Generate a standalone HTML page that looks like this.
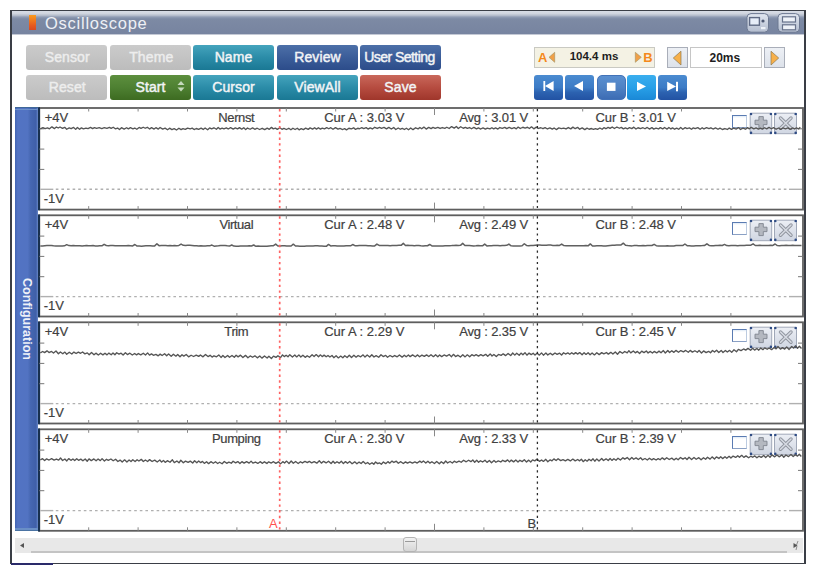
<!DOCTYPE html><html><head><meta charset="utf-8"><style>
*{margin:0;padding:0;box-sizing:border-box}
html,body{width:816px;height:574px;background:#fff;overflow:hidden;font-family:"Liberation Sans",sans-serif}
.a{position:absolute}
#win{left:10px;top:10px;width:796px;height:554px;border:2px solid #3a3e46;border-top-width:1px;border-bottom-width:1.5px;background:#fff}
#title{left:12px;top:11px;width:792px;height:24px;background:linear-gradient(#d8dde6 0,#d0d5df 2.5px,#b4bccb 4.5px,#909cb4 6px,#7d8aa4 8px,#7784a0 100%);border-bottom:1px solid #c4c9d5}
#title .t{left:33px;top:2.5px;color:#eef0f5;font-size:16.5px;letter-spacing:0.75px;line-height:19px}
.btn{width:81px;height:25px;border-radius:3px;color:#f2f4f6;font-weight:normal;-webkit-text-stroke:0.45px currentColor;font-size:14px;letter-spacing:0.1px;text-align:center;line-height:25px;white-space:nowrap}
.g{background:linear-gradient(#cbcbcb,#bcbcbc);color:#ededed;padding-left:1.5px}
.teal{background:linear-gradient(#45a4bd 0,#2b8ca8 50%,#1a7894)}
.navy{background:linear-gradient(#4d70a8 0,#3b5d99 50%,#2c4c8a)}
.green{background:linear-gradient(#5d8f3e 0,#4e8032 50%,#3d6b21)}
.red{background:linear-gradient(#c9685b 0,#b64c40 50%,#9f362b)}
.mb{width:29px;height:25px;border-radius:3px;background:linear-gradient(#4b8bd0 0,#3c7bc6 50%,#2c62b0 70%,#2252a3)}
.pt{font-size:13px;color:#404040;white-space:nowrap;line-height:13px;-webkit-text-stroke:0.2px #404040}
.cb{width:15px;height:13px;border:1.6px solid #5a7bb2;border-right:1.6px solid #bccbe0;border-bottom:1.3px solid #8aa0c4;background:linear-gradient(#dfeaf6 0,#fff 2px)}
.pb{width:22px;height:21px;border:1px solid #a4acbb;border-radius:2px;background:linear-gradient(#e6eaf1,#d2d8e3)}
.ab{width:21px;height:21.5px;border:1px solid #a9aeb9;background:linear-gradient(#edf0f5,#dde2ea)}
</style></head><body>
<div id="win" class="a"></div>
<div id="title" class="a">
<div class="a" style="left:16.6px;top:4.3px;width:7.5px;height:15px;background:linear-gradient(#f99a1c,#f07a1e 35%,#e65a20 70%,#d84a22)"></div>
<div class="a t">Oscilloscope</div>
</div>
<svg class="a" style="left:744px;top:11px" width="60" height="24">
<defs><linearGradient id="tbg" x1="0" y1="0" x2="0" y2="1"><stop offset="0" stop-color="#e2e7f0"/><stop offset="1" stop-color="#b3bdcf"/></linearGradient></defs>
<rect x="3" y="2.6" width="21.5" height="18.6" rx="4" fill="url(#tbg)" stroke="#6c7891" stroke-width="1"/>
<rect x="5.6" y="6.6" width="9.8" height="7.6" fill="#e6edf8" stroke="#5f6a84" stroke-width="1.4"/>
<circle cx="19" cy="10" r="1.6" fill="#4d5873"/>
<rect x="17" y="16" width="4.5" height="2.2" fill="#eef2f8"/>
<rect x="34" y="2.6" width="21.5" height="18.6" rx="4" fill="url(#tbg)" stroke="#6c7891" stroke-width="1"/>
<rect x="38.5" y="5.8" width="13" height="5.2" fill="#eef2f8" stroke="#67728b" stroke-width="1.2"/>
<rect x="38.5" y="13.8" width="13" height="5" fill="#eef2f8" stroke="#67728b" stroke-width="1.2"/>
</svg>
<div class="a btn g" style="left:26px;top:45px;">Sensor</div>
<div class="a btn g" style="left:110px;top:45px;">Theme</div>
<div class="a btn teal" style="left:193px;top:45px;">Name</div>
<div class="a btn navy" style="left:277px;top:45px;">Review</div>
<div class="a btn navy" style="left:360px;top:45px;letter-spacing:-0.55px;padding-right:2px;">User Setting</div>
<div class="a btn g" style="left:26px;top:75px;">Reset</div>
<div class="a btn green" style="left:110px;top:75px;">Start</div>
<div class="a btn teal" style="left:193px;top:75px;">Cursor</div>
<div class="a btn teal" style="left:277px;top:75px;">ViewAll</div>
<div class="a btn red" style="left:360px;top:75px;">Save</div>
<svg class="a" style="left:176px;top:80px" width="10" height="13"><path d="M1.5,5 L5,1 L8.5,5Z M1.5,7.5 L5,11.5 L8.5,7.5Z" fill="#c5d9bd"/></svg>
<div class="a" style="left:534px;top:46.5px;width:121px;height:21px;border:1px solid #c9c9c2;background:#f4f2e4"></div>
<div class="a" style="left:538px;top:50.5px;color:#f4891c;font-size:13px;font-weight:bold;line-height:13px">A</div>
<div class="a" style="left:643.3px;top:50.5px;color:#f4891c;font-size:13px;font-weight:bold;line-height:13px">B</div>
<svg class="a" style="left:546px;top:51px" width="12" height="14"><path d="M3,6.3 L8.7,1.3 L8.7,11.3Z" fill="#f0a048" stroke="#a09060" stroke-width="0.6"/></svg>
<svg class="a" style="left:633px;top:51px" width="12" height="14"><path d="M8.3,6.3 L2.3,1.3 L2.3,11.3Z" fill="#f0a048" stroke="#a09060" stroke-width="0.6"/></svg>
<div class="a" style="left:569.7px;top:51px;color:#1e1e1e;font-size:11.5px;font-weight:bold;line-height:11.5px">104.4 ms</div>
<div class="a ab" style="left:667px;top:46.5px"></div>
<div class="a" style="left:690px;top:46.5px;width:72px;height:21px;border:1.5px solid #c6c6c6;background:#fff"></div>
<div class="a ab" style="left:764px;top:46.5px"></div>
<svg class="a" style="left:667px;top:46.5px" width="21" height="22"><path d="M6.3,11 L14,4.2 L14,18Z" fill="#f7b04a" stroke="#8c7850" stroke-width="0.7"/></svg>
<svg class="a" style="left:764px;top:46.5px" width="21" height="22"><path d="M14.7,11 L7,4.2 L7,18Z" fill="#f7b04a" stroke="#8c7850" stroke-width="0.7"/></svg>
<div class="a" style="left:709.5px;top:51.5px;color:#1e1e1e;font-size:12px;font-weight:bold;line-height:12px">20ms</div>
<div class="a mb" style="left:534px;top:74.5px;"></div>
<svg class="a" style="left:534px;top:73.9px" width="29" height="25"><rect x="9.4" y="7" width="1.8" height="10" fill="#fff"/><path d="M11,12 L19.6,7 L19.6,17Z" fill="#fff"/></svg>
<div class="a mb" style="left:565.3px;top:74.5px;"></div>
<svg class="a" style="left:565.3px;top:73.9px" width="29" height="25"><path d="M9,12 L18,7 L18,17Z" fill="#fff"/></svg>
<div class="a mb" style="left:596.5px;top:74.5px;background:linear-gradient(#5a8fd0,#4f82c4 50%,#3d6cb4);border:1.5px solid #4272b8;border-radius:5px"></div>
<svg class="a" style="left:596.5px;top:73.9px" width="29" height="25"><rect x="9.9" y="8.7" width="8.6" height="8.2" fill="#fff"/></svg>
<div class="a mb" style="left:627px;top:74.5px;background:linear-gradient(#3aaeee,#28a0e8 50%,#1a88d6)"></div>
<svg class="a" style="left:627px;top:73.9px" width="29" height="25"><path d="M19,12.5 L10,7.8 L10,17Z" fill="#fff"/></svg>
<div class="a mb" style="left:658.3px;top:74.5px;"></div>
<svg class="a" style="left:658.3px;top:73.9px" width="29" height="25"><path d="M18,12.5 L9.2,7.8 L9.2,17Z" fill="#fff"/><rect x="18" y="7.8" width="2" height="9.5" fill="#fff"/></svg>
<div class="a" style="left:14.8px;top:107.2px;width:23.4px;height:424.3px;border-top:1.5px solid #3f6898;border-bottom:1.3px solid #4a73a3;background:linear-gradient(90deg,#4264b2 0,#5273c3 12%,#5273c2 55%,#4667b2 68%,#3f5fa8 92%,#5b7bbf 96%,#6282c4 100%)"></div>
<div class="a" style="left:14.8px;top:108.7px;width:23.4px;height:1.2px;background:#6f93c9"></div>
<div class="a" style="left:14.8px;top:528.2px;width:23.4px;height:1.8px;background:#6a8fc6"></div>
<div class="a" style="left:15.5px;top:277.5px;width:22px;height:82px;writing-mode:vertical-rl;color:#eef1f8;font-weight:bold;font-size:12.5px;line-height:22px;text-align:center;white-space:nowrap">Configuration</div>
<svg class="a" style="left:0;top:0" width="816" height="574">
<rect x="39.3" y="108" width="763.7" height="101.6" fill="#fff" stroke="#5e5e5e" stroke-width="1.8"/>
<line x1="39" y1="107.3" x2="39" y2="210.29999999999998" stroke="#18304f" stroke-width="2"/>
<line x1="40.3" y1="189.3" x2="53.3" y2="189.3" stroke="#b0b0b0" stroke-width="1.4"/>
<line x1="55.8" y1="189.3" x2="789" y2="189.3" stroke="#b0b0b0" stroke-width="1.4" stroke-dasharray="2.6 3"/>
<line x1="789" y1="189.3" x2="802" y2="189.3" stroke="#b0b0b0" stroke-width="1.4"/>
<line x1="39.3" y1="128.8" x2="44.3" y2="128.8" stroke="#777" stroke-width="1"/>
<line x1="798" y1="128.8" x2="803" y2="128.8" stroke="#777" stroke-width="1"/>
<line x1="39.3" y1="149.1" x2="44.3" y2="149.1" stroke="#777" stroke-width="1"/>
<line x1="798" y1="149.1" x2="803" y2="149.1" stroke="#777" stroke-width="1"/>
<line x1="39.3" y1="169.4" x2="44.3" y2="169.4" stroke="#777" stroke-width="1"/>
<line x1="798" y1="169.4" x2="803" y2="169.4" stroke="#777" stroke-width="1"/>
<line x1="88.7" y1="108" x2="88.7" y2="111.5" stroke="#888" stroke-width="1"/>
<line x1="88.7" y1="206.1" x2="88.7" y2="209.6" stroke="#888" stroke-width="1"/>
<line x1="138.1" y1="108" x2="138.1" y2="111.5" stroke="#888" stroke-width="1"/>
<line x1="138.1" y1="206.1" x2="138.1" y2="209.6" stroke="#888" stroke-width="1"/>
<line x1="187.5" y1="108" x2="187.5" y2="111.5" stroke="#888" stroke-width="1"/>
<line x1="187.5" y1="206.1" x2="187.5" y2="209.6" stroke="#888" stroke-width="1"/>
<line x1="236.9" y1="108" x2="236.9" y2="111.5" stroke="#888" stroke-width="1"/>
<line x1="236.9" y1="206.1" x2="236.9" y2="209.6" stroke="#888" stroke-width="1"/>
<line x1="286.3" y1="108" x2="286.3" y2="111.5" stroke="#888" stroke-width="1"/>
<line x1="286.3" y1="206.1" x2="286.3" y2="209.6" stroke="#888" stroke-width="1"/>
<line x1="335.7" y1="108" x2="335.7" y2="111.5" stroke="#888" stroke-width="1"/>
<line x1="335.7" y1="206.1" x2="335.7" y2="209.6" stroke="#888" stroke-width="1"/>
<line x1="385.1" y1="108" x2="385.1" y2="111.5" stroke="#888" stroke-width="1"/>
<line x1="385.1" y1="206.1" x2="385.1" y2="209.6" stroke="#888" stroke-width="1"/>
<line x1="434.5" y1="108" x2="434.5" y2="115" stroke="#888" stroke-width="1"/>
<line x1="434.5" y1="202.6" x2="434.5" y2="209.6" stroke="#888" stroke-width="1"/>
<line x1="483.9" y1="108" x2="483.9" y2="111.5" stroke="#888" stroke-width="1"/>
<line x1="483.9" y1="206.1" x2="483.9" y2="209.6" stroke="#888" stroke-width="1"/>
<line x1="533.3" y1="108" x2="533.3" y2="111.5" stroke="#888" stroke-width="1"/>
<line x1="533.3" y1="206.1" x2="533.3" y2="209.6" stroke="#888" stroke-width="1"/>
<line x1="582.7" y1="108" x2="582.7" y2="111.5" stroke="#888" stroke-width="1"/>
<line x1="582.7" y1="206.1" x2="582.7" y2="209.6" stroke="#888" stroke-width="1"/>
<line x1="632.1" y1="108" x2="632.1" y2="111.5" stroke="#888" stroke-width="1"/>
<line x1="632.1" y1="206.1" x2="632.1" y2="209.6" stroke="#888" stroke-width="1"/>
<line x1="681.5" y1="108" x2="681.5" y2="111.5" stroke="#888" stroke-width="1"/>
<line x1="681.5" y1="206.1" x2="681.5" y2="209.6" stroke="#888" stroke-width="1"/>
<line x1="730.9" y1="108" x2="730.9" y2="111.5" stroke="#888" stroke-width="1"/>
<line x1="730.9" y1="206.1" x2="730.9" y2="209.6" stroke="#888" stroke-width="1"/>
<rect x="39.3" y="215.3" width="763.7" height="101.2" fill="#fff" stroke="#5e5e5e" stroke-width="1.8"/>
<line x1="39" y1="214.60000000000002" x2="39" y2="317.2" stroke="#18304f" stroke-width="2"/>
<line x1="40.3" y1="296.6" x2="53.3" y2="296.6" stroke="#b0b0b0" stroke-width="1.4"/>
<line x1="55.8" y1="296.6" x2="789" y2="296.6" stroke="#b0b0b0" stroke-width="1.4" stroke-dasharray="2.6 3"/>
<line x1="789" y1="296.6" x2="802" y2="296.6" stroke="#b0b0b0" stroke-width="1.4"/>
<line x1="39.3" y1="236.10000000000002" x2="44.3" y2="236.10000000000002" stroke="#777" stroke-width="1"/>
<line x1="798" y1="236.10000000000002" x2="803" y2="236.10000000000002" stroke="#777" stroke-width="1"/>
<line x1="39.3" y1="256.40000000000003" x2="44.3" y2="256.40000000000003" stroke="#777" stroke-width="1"/>
<line x1="798" y1="256.40000000000003" x2="803" y2="256.40000000000003" stroke="#777" stroke-width="1"/>
<line x1="39.3" y1="276.70000000000005" x2="44.3" y2="276.70000000000005" stroke="#777" stroke-width="1"/>
<line x1="798" y1="276.70000000000005" x2="803" y2="276.70000000000005" stroke="#777" stroke-width="1"/>
<line x1="88.7" y1="215.3" x2="88.7" y2="218.8" stroke="#888" stroke-width="1"/>
<line x1="88.7" y1="313.0" x2="88.7" y2="316.5" stroke="#888" stroke-width="1"/>
<line x1="138.1" y1="215.3" x2="138.1" y2="218.8" stroke="#888" stroke-width="1"/>
<line x1="138.1" y1="313.0" x2="138.1" y2="316.5" stroke="#888" stroke-width="1"/>
<line x1="187.5" y1="215.3" x2="187.5" y2="218.8" stroke="#888" stroke-width="1"/>
<line x1="187.5" y1="313.0" x2="187.5" y2="316.5" stroke="#888" stroke-width="1"/>
<line x1="236.9" y1="215.3" x2="236.9" y2="218.8" stroke="#888" stroke-width="1"/>
<line x1="236.9" y1="313.0" x2="236.9" y2="316.5" stroke="#888" stroke-width="1"/>
<line x1="286.3" y1="215.3" x2="286.3" y2="218.8" stroke="#888" stroke-width="1"/>
<line x1="286.3" y1="313.0" x2="286.3" y2="316.5" stroke="#888" stroke-width="1"/>
<line x1="335.7" y1="215.3" x2="335.7" y2="218.8" stroke="#888" stroke-width="1"/>
<line x1="335.7" y1="313.0" x2="335.7" y2="316.5" stroke="#888" stroke-width="1"/>
<line x1="385.1" y1="215.3" x2="385.1" y2="218.8" stroke="#888" stroke-width="1"/>
<line x1="385.1" y1="313.0" x2="385.1" y2="316.5" stroke="#888" stroke-width="1"/>
<line x1="434.5" y1="215.3" x2="434.5" y2="222.3" stroke="#888" stroke-width="1"/>
<line x1="434.5" y1="309.5" x2="434.5" y2="316.5" stroke="#888" stroke-width="1"/>
<line x1="483.9" y1="215.3" x2="483.9" y2="218.8" stroke="#888" stroke-width="1"/>
<line x1="483.9" y1="313.0" x2="483.9" y2="316.5" stroke="#888" stroke-width="1"/>
<line x1="533.3" y1="215.3" x2="533.3" y2="218.8" stroke="#888" stroke-width="1"/>
<line x1="533.3" y1="313.0" x2="533.3" y2="316.5" stroke="#888" stroke-width="1"/>
<line x1="582.7" y1="215.3" x2="582.7" y2="218.8" stroke="#888" stroke-width="1"/>
<line x1="582.7" y1="313.0" x2="582.7" y2="316.5" stroke="#888" stroke-width="1"/>
<line x1="632.1" y1="215.3" x2="632.1" y2="218.8" stroke="#888" stroke-width="1"/>
<line x1="632.1" y1="313.0" x2="632.1" y2="316.5" stroke="#888" stroke-width="1"/>
<line x1="681.5" y1="215.3" x2="681.5" y2="218.8" stroke="#888" stroke-width="1"/>
<line x1="681.5" y1="313.0" x2="681.5" y2="316.5" stroke="#888" stroke-width="1"/>
<line x1="730.9" y1="215.3" x2="730.9" y2="218.8" stroke="#888" stroke-width="1"/>
<line x1="730.9" y1="313.0" x2="730.9" y2="316.5" stroke="#888" stroke-width="1"/>
<rect x="39.3" y="322.3" width="763.7" height="101.2" fill="#fff" stroke="#5e5e5e" stroke-width="1.8"/>
<line x1="39" y1="321.6" x2="39" y2="424.2" stroke="#18304f" stroke-width="2"/>
<line x1="40.3" y1="403.6" x2="53.3" y2="403.6" stroke="#b0b0b0" stroke-width="1.4"/>
<line x1="55.8" y1="403.6" x2="789" y2="403.6" stroke="#b0b0b0" stroke-width="1.4" stroke-dasharray="2.6 3"/>
<line x1="789" y1="403.6" x2="802" y2="403.6" stroke="#b0b0b0" stroke-width="1.4"/>
<line x1="39.3" y1="343.1" x2="44.3" y2="343.1" stroke="#777" stroke-width="1"/>
<line x1="798" y1="343.1" x2="803" y2="343.1" stroke="#777" stroke-width="1"/>
<line x1="39.3" y1="363.40000000000003" x2="44.3" y2="363.40000000000003" stroke="#777" stroke-width="1"/>
<line x1="798" y1="363.40000000000003" x2="803" y2="363.40000000000003" stroke="#777" stroke-width="1"/>
<line x1="39.3" y1="383.70000000000005" x2="44.3" y2="383.70000000000005" stroke="#777" stroke-width="1"/>
<line x1="798" y1="383.70000000000005" x2="803" y2="383.70000000000005" stroke="#777" stroke-width="1"/>
<line x1="88.7" y1="322.3" x2="88.7" y2="325.8" stroke="#888" stroke-width="1"/>
<line x1="88.7" y1="420.0" x2="88.7" y2="423.5" stroke="#888" stroke-width="1"/>
<line x1="138.1" y1="322.3" x2="138.1" y2="325.8" stroke="#888" stroke-width="1"/>
<line x1="138.1" y1="420.0" x2="138.1" y2="423.5" stroke="#888" stroke-width="1"/>
<line x1="187.5" y1="322.3" x2="187.5" y2="325.8" stroke="#888" stroke-width="1"/>
<line x1="187.5" y1="420.0" x2="187.5" y2="423.5" stroke="#888" stroke-width="1"/>
<line x1="236.9" y1="322.3" x2="236.9" y2="325.8" stroke="#888" stroke-width="1"/>
<line x1="236.9" y1="420.0" x2="236.9" y2="423.5" stroke="#888" stroke-width="1"/>
<line x1="286.3" y1="322.3" x2="286.3" y2="325.8" stroke="#888" stroke-width="1"/>
<line x1="286.3" y1="420.0" x2="286.3" y2="423.5" stroke="#888" stroke-width="1"/>
<line x1="335.7" y1="322.3" x2="335.7" y2="325.8" stroke="#888" stroke-width="1"/>
<line x1="335.7" y1="420.0" x2="335.7" y2="423.5" stroke="#888" stroke-width="1"/>
<line x1="385.1" y1="322.3" x2="385.1" y2="325.8" stroke="#888" stroke-width="1"/>
<line x1="385.1" y1="420.0" x2="385.1" y2="423.5" stroke="#888" stroke-width="1"/>
<line x1="434.5" y1="322.3" x2="434.5" y2="329.3" stroke="#888" stroke-width="1"/>
<line x1="434.5" y1="416.5" x2="434.5" y2="423.5" stroke="#888" stroke-width="1"/>
<line x1="483.9" y1="322.3" x2="483.9" y2="325.8" stroke="#888" stroke-width="1"/>
<line x1="483.9" y1="420.0" x2="483.9" y2="423.5" stroke="#888" stroke-width="1"/>
<line x1="533.3" y1="322.3" x2="533.3" y2="325.8" stroke="#888" stroke-width="1"/>
<line x1="533.3" y1="420.0" x2="533.3" y2="423.5" stroke="#888" stroke-width="1"/>
<line x1="582.7" y1="322.3" x2="582.7" y2="325.8" stroke="#888" stroke-width="1"/>
<line x1="582.7" y1="420.0" x2="582.7" y2="423.5" stroke="#888" stroke-width="1"/>
<line x1="632.1" y1="322.3" x2="632.1" y2="325.8" stroke="#888" stroke-width="1"/>
<line x1="632.1" y1="420.0" x2="632.1" y2="423.5" stroke="#888" stroke-width="1"/>
<line x1="681.5" y1="322.3" x2="681.5" y2="325.8" stroke="#888" stroke-width="1"/>
<line x1="681.5" y1="420.0" x2="681.5" y2="423.5" stroke="#888" stroke-width="1"/>
<line x1="730.9" y1="322.3" x2="730.9" y2="325.8" stroke="#888" stroke-width="1"/>
<line x1="730.9" y1="420.0" x2="730.9" y2="423.5" stroke="#888" stroke-width="1"/>
<rect x="39.3" y="429.3" width="763.7" height="101.5" fill="#fff" stroke="#5e5e5e" stroke-width="1.8"/>
<line x1="39" y1="428.6" x2="39" y2="531.5" stroke="#18304f" stroke-width="2"/>
<line x1="40.3" y1="510.6" x2="53.3" y2="510.6" stroke="#b0b0b0" stroke-width="1.4"/>
<line x1="55.8" y1="510.6" x2="789" y2="510.6" stroke="#b0b0b0" stroke-width="1.4" stroke-dasharray="2.6 3"/>
<line x1="789" y1="510.6" x2="802" y2="510.6" stroke="#b0b0b0" stroke-width="1.4"/>
<line x1="39.3" y1="450.1" x2="44.3" y2="450.1" stroke="#777" stroke-width="1"/>
<line x1="798" y1="450.1" x2="803" y2="450.1" stroke="#777" stroke-width="1"/>
<line x1="39.3" y1="470.40000000000003" x2="44.3" y2="470.40000000000003" stroke="#777" stroke-width="1"/>
<line x1="798" y1="470.40000000000003" x2="803" y2="470.40000000000003" stroke="#777" stroke-width="1"/>
<line x1="39.3" y1="490.70000000000005" x2="44.3" y2="490.70000000000005" stroke="#777" stroke-width="1"/>
<line x1="798" y1="490.70000000000005" x2="803" y2="490.70000000000005" stroke="#777" stroke-width="1"/>
<line x1="88.7" y1="429.3" x2="88.7" y2="432.8" stroke="#888" stroke-width="1"/>
<line x1="88.7" y1="527.3" x2="88.7" y2="530.8" stroke="#888" stroke-width="1"/>
<line x1="138.1" y1="429.3" x2="138.1" y2="432.8" stroke="#888" stroke-width="1"/>
<line x1="138.1" y1="527.3" x2="138.1" y2="530.8" stroke="#888" stroke-width="1"/>
<line x1="187.5" y1="429.3" x2="187.5" y2="432.8" stroke="#888" stroke-width="1"/>
<line x1="187.5" y1="527.3" x2="187.5" y2="530.8" stroke="#888" stroke-width="1"/>
<line x1="236.9" y1="429.3" x2="236.9" y2="432.8" stroke="#888" stroke-width="1"/>
<line x1="236.9" y1="527.3" x2="236.9" y2="530.8" stroke="#888" stroke-width="1"/>
<line x1="286.3" y1="429.3" x2="286.3" y2="432.8" stroke="#888" stroke-width="1"/>
<line x1="286.3" y1="527.3" x2="286.3" y2="530.8" stroke="#888" stroke-width="1"/>
<line x1="335.7" y1="429.3" x2="335.7" y2="432.8" stroke="#888" stroke-width="1"/>
<line x1="335.7" y1="527.3" x2="335.7" y2="530.8" stroke="#888" stroke-width="1"/>
<line x1="385.1" y1="429.3" x2="385.1" y2="432.8" stroke="#888" stroke-width="1"/>
<line x1="385.1" y1="527.3" x2="385.1" y2="530.8" stroke="#888" stroke-width="1"/>
<line x1="434.5" y1="429.3" x2="434.5" y2="436.3" stroke="#888" stroke-width="1"/>
<line x1="434.5" y1="523.8" x2="434.5" y2="530.8" stroke="#888" stroke-width="1"/>
<line x1="483.9" y1="429.3" x2="483.9" y2="432.8" stroke="#888" stroke-width="1"/>
<line x1="483.9" y1="527.3" x2="483.9" y2="530.8" stroke="#888" stroke-width="1"/>
<line x1="533.3" y1="429.3" x2="533.3" y2="432.8" stroke="#888" stroke-width="1"/>
<line x1="533.3" y1="527.3" x2="533.3" y2="530.8" stroke="#888" stroke-width="1"/>
<line x1="582.7" y1="429.3" x2="582.7" y2="432.8" stroke="#888" stroke-width="1"/>
<line x1="582.7" y1="527.3" x2="582.7" y2="530.8" stroke="#888" stroke-width="1"/>
<line x1="632.1" y1="429.3" x2="632.1" y2="432.8" stroke="#888" stroke-width="1"/>
<line x1="632.1" y1="527.3" x2="632.1" y2="530.8" stroke="#888" stroke-width="1"/>
<line x1="681.5" y1="429.3" x2="681.5" y2="432.8" stroke="#888" stroke-width="1"/>
<line x1="681.5" y1="527.3" x2="681.5" y2="530.8" stroke="#888" stroke-width="1"/>
<line x1="730.9" y1="429.3" x2="730.9" y2="432.8" stroke="#888" stroke-width="1"/>
<line x1="730.9" y1="527.3" x2="730.9" y2="530.8" stroke="#888" stroke-width="1"/>
</svg>
<div class="a pt" style="left:44.7px;top:111px">+4V</div>
<div class="a pt" style="left:43.7px;top:191.8px">-1V</div>
<div class="a pt" style="left:186.3px;width:100px;text-align:center;top:111px;letter-spacing:-0.4px">Nernst</div>
<div class="a pt" style="left:324.2px;top:111px">Cur A : 3.03 V</div>
<div class="a pt" style="left:459.2px;top:111px;letter-spacing:-0.15px">Avg : 3.01 V</div>
<div class="a pt" style="left:595.5px;top:111px;letter-spacing:-0.1px">Cur B : 3.01 V</div>
<div class="a cb" style="left:731.6px;top:114.7px"></div>
<svg class="a" style="left:749px;top:111.5px" width="50" height="24">
<defs><linearGradient id="pg0" x1="0" y1="0" x2="0" y2="1"><stop offset="0" stop-color="#eceff5"/><stop offset="1" stop-color="#d0d6e2"/></linearGradient></defs>
<rect x="1.2" y="1.2" width="21.5" height="20.5" rx="2" fill="url(#pg0)" stroke="#a0a8b8" stroke-width="1"/>
<rect x="25.5" y="1.2" width="22" height="20.5" rx="2" fill="url(#pg0)" stroke="#a0a8b8" stroke-width="1"/>
<path d="M9.9,4.6 h4.4 v3.6 h3.7 v4.4 h-3.7 v4 h-4.4 v-4 h-3.9 v-4.4 h3.9Z" fill="#b4b8c0" stroke="#7f848e" stroke-width="0.9"/>
<path d="M31.5,6 L42,16.2 M42,6 L31.5,16.2" stroke="#8f949e" stroke-width="3.4" stroke-linecap="round"/>
<path d="M31.5,6 L42,16.2 M42,6 L31.5,16.2" stroke="#d6dae2" stroke-width="1.6" stroke-linecap="round"/>
<g fill="#2f4c84"><circle cx="2" cy="2" r="1.3"/><circle cx="21.9" cy="2" r="1.3"/><circle cx="2" cy="20.9" r="1.3"/><circle cx="21.9" cy="20.9" r="1.3"/>
<circle cx="26.3" cy="2" r="1.3"/><circle cx="46.7" cy="2" r="1.3"/><circle cx="26.3" cy="20.9" r="1.3"/><circle cx="46.7" cy="20.9" r="1.3"/></g>
</svg>
<div class="a pt" style="left:44.7px;top:218.3px">+4V</div>
<div class="a pt" style="left:43.7px;top:299.1px">-1V</div>
<div class="a pt" style="left:186.3px;width:100px;text-align:center;top:218.3px;letter-spacing:-0.4px">Virtual</div>
<div class="a pt" style="left:324.2px;top:218.3px">Cur A : 2.48 V</div>
<div class="a pt" style="left:459.2px;top:218.3px;letter-spacing:-0.15px">Avg : 2.49 V</div>
<div class="a pt" style="left:595.5px;top:218.3px;letter-spacing:-0.1px">Cur B : 2.48 V</div>
<div class="a cb" style="left:731.6px;top:222.0px"></div>
<svg class="a" style="left:749px;top:218.8px" width="50" height="24">
<defs><linearGradient id="pg1" x1="0" y1="0" x2="0" y2="1"><stop offset="0" stop-color="#eceff5"/><stop offset="1" stop-color="#d0d6e2"/></linearGradient></defs>
<rect x="1.2" y="1.2" width="21.5" height="20.5" rx="2" fill="url(#pg1)" stroke="#a0a8b8" stroke-width="1"/>
<rect x="25.5" y="1.2" width="22" height="20.5" rx="2" fill="url(#pg1)" stroke="#a0a8b8" stroke-width="1"/>
<path d="M9.9,4.6 h4.4 v3.6 h3.7 v4.4 h-3.7 v4 h-4.4 v-4 h-3.9 v-4.4 h3.9Z" fill="#b4b8c0" stroke="#7f848e" stroke-width="0.9"/>
<path d="M31.5,6 L42,16.2 M42,6 L31.5,16.2" stroke="#8f949e" stroke-width="3.4" stroke-linecap="round"/>
<path d="M31.5,6 L42,16.2 M42,6 L31.5,16.2" stroke="#d6dae2" stroke-width="1.6" stroke-linecap="round"/>
<g fill="#2f4c84"><circle cx="2" cy="2" r="1.3"/><circle cx="21.9" cy="2" r="1.3"/><circle cx="2" cy="20.9" r="1.3"/><circle cx="21.9" cy="20.9" r="1.3"/>
<circle cx="26.3" cy="2" r="1.3"/><circle cx="46.7" cy="2" r="1.3"/><circle cx="26.3" cy="20.9" r="1.3"/><circle cx="46.7" cy="20.9" r="1.3"/></g>
</svg>
<div class="a pt" style="left:44.7px;top:325.3px">+4V</div>
<div class="a pt" style="left:43.7px;top:406.1px">-1V</div>
<div class="a pt" style="left:186.3px;width:100px;text-align:center;top:325.3px;letter-spacing:-0.4px">Trim</div>
<div class="a pt" style="left:324.2px;top:325.3px">Cur A : 2.29 V</div>
<div class="a pt" style="left:459.2px;top:325.3px;letter-spacing:-0.15px">Avg : 2.35 V</div>
<div class="a pt" style="left:595.5px;top:325.3px;letter-spacing:-0.1px">Cur B : 2.45 V</div>
<div class="a cb" style="left:731.6px;top:329.0px"></div>
<svg class="a" style="left:749px;top:325.8px" width="50" height="24">
<defs><linearGradient id="pg2" x1="0" y1="0" x2="0" y2="1"><stop offset="0" stop-color="#eceff5"/><stop offset="1" stop-color="#d0d6e2"/></linearGradient></defs>
<rect x="1.2" y="1.2" width="21.5" height="20.5" rx="2" fill="url(#pg2)" stroke="#a0a8b8" stroke-width="1"/>
<rect x="25.5" y="1.2" width="22" height="20.5" rx="2" fill="url(#pg2)" stroke="#a0a8b8" stroke-width="1"/>
<path d="M9.9,4.6 h4.4 v3.6 h3.7 v4.4 h-3.7 v4 h-4.4 v-4 h-3.9 v-4.4 h3.9Z" fill="#b4b8c0" stroke="#7f848e" stroke-width="0.9"/>
<path d="M31.5,6 L42,16.2 M42,6 L31.5,16.2" stroke="#8f949e" stroke-width="3.4" stroke-linecap="round"/>
<path d="M31.5,6 L42,16.2 M42,6 L31.5,16.2" stroke="#d6dae2" stroke-width="1.6" stroke-linecap="round"/>
<g fill="#2f4c84"><circle cx="2" cy="2" r="1.3"/><circle cx="21.9" cy="2" r="1.3"/><circle cx="2" cy="20.9" r="1.3"/><circle cx="21.9" cy="20.9" r="1.3"/>
<circle cx="26.3" cy="2" r="1.3"/><circle cx="46.7" cy="2" r="1.3"/><circle cx="26.3" cy="20.9" r="1.3"/><circle cx="46.7" cy="20.9" r="1.3"/></g>
</svg>
<div class="a pt" style="left:44.7px;top:432.3px">+4V</div>
<div class="a pt" style="left:43.7px;top:513.1px">-1V</div>
<div class="a pt" style="left:186.3px;width:100px;text-align:center;top:432.3px;letter-spacing:-0.4px">Pumping</div>
<div class="a pt" style="left:324.2px;top:432.3px">Cur A : 2.30 V</div>
<div class="a pt" style="left:459.2px;top:432.3px;letter-spacing:-0.15px">Avg : 2.33 V</div>
<div class="a pt" style="left:595.5px;top:432.3px;letter-spacing:-0.1px">Cur B : 2.39 V</div>
<div class="a cb" style="left:731.6px;top:436.0px"></div>
<svg class="a" style="left:749px;top:432.8px" width="50" height="24">
<defs><linearGradient id="pg3" x1="0" y1="0" x2="0" y2="1"><stop offset="0" stop-color="#eceff5"/><stop offset="1" stop-color="#d0d6e2"/></linearGradient></defs>
<rect x="1.2" y="1.2" width="21.5" height="20.5" rx="2" fill="url(#pg3)" stroke="#a0a8b8" stroke-width="1"/>
<rect x="25.5" y="1.2" width="22" height="20.5" rx="2" fill="url(#pg3)" stroke="#a0a8b8" stroke-width="1"/>
<path d="M9.9,4.6 h4.4 v3.6 h3.7 v4.4 h-3.7 v4 h-4.4 v-4 h-3.9 v-4.4 h3.9Z" fill="#b4b8c0" stroke="#7f848e" stroke-width="0.9"/>
<path d="M31.5,6 L42,16.2 M42,6 L31.5,16.2" stroke="#8f949e" stroke-width="3.4" stroke-linecap="round"/>
<path d="M31.5,6 L42,16.2 M42,6 L31.5,16.2" stroke="#d6dae2" stroke-width="1.6" stroke-linecap="round"/>
<g fill="#2f4c84"><circle cx="2" cy="2" r="1.3"/><circle cx="21.9" cy="2" r="1.3"/><circle cx="2" cy="20.9" r="1.3"/><circle cx="21.9" cy="20.9" r="1.3"/>
<circle cx="26.3" cy="2" r="1.3"/><circle cx="46.7" cy="2" r="1.3"/><circle cx="26.3" cy="20.9" r="1.3"/><circle cx="46.7" cy="20.9" r="1.3"/></g>
</svg>
<svg class="a" style="left:0;top:0" width="816" height="574">
<path d="M40.3,128.93 L42.9,127.61 L45.2,128.67 L47.5,127.87 L49.5,128.79 L51.9,126.83 L54.5,128.61 L56.4,126.99 L58.2,128.01 L60.0,127.01 L62.5,128.43 L64.7,127.32 L66.7,129.23 L69.2,127.94 L71.1,128.70 L73.6,127.41 L75.7,129.38 L77.4,127.47 L79.6,129.23 L81.4,127.91 L83.4,128.88 L86.0,128.09 L88.0,128.60 L90.5,127.33 L92.6,128.58 L94.5,127.57 L96.6,128.35 L99.2,127.60 L101.8,128.52 L104.3,127.68 L106.9,128.43 L109.4,127.34 L111.2,128.32 L113.2,127.25 L115.3,128.83 L117.6,128.02 L119.5,129.54 L121.5,127.69 L124.1,129.09 L126.6,127.72 L128.4,128.86 L130.4,127.67 L132.9,128.78 L134.8,128.02 L136.8,129.26 L139.1,127.41 L141.0,128.44 L143.2,127.23 L145.2,128.26 L147.3,127.28 L149.7,129.00 L151.5,127.62 L154.1,129.06 L155.9,127.67 L158.3,129.07 L160.1,127.46 L162.7,129.14 L165.1,128.12 L167.5,129.73 L169.6,128.19 L171.9,129.56 L174.2,128.56 L176.5,130.05 L178.9,128.24 L181.1,129.66 L183.0,128.57 L185.3,129.32 L187.6,128.06 L190.2,128.88 L192.2,128.14 L194.1,129.56 L196.3,128.50 L198.6,129.31 L201.1,128.11 L203.2,129.44 L205.1,128.00 L207.6,129.76 L209.6,127.96 L211.6,128.91 L213.9,127.79 L216.4,129.26 L218.2,127.44 L220.0,129.09 L222.1,128.24 L223.9,128.90 L226.4,127.87 L228.2,129.00 L230.6,127.70 L233.2,129.06 L235.3,127.96 L237.5,128.93 L239.5,127.60 L241.7,129.18 L243.8,127.75 L245.7,129.61 L247.5,128.04 L250.1,129.26 L252.6,127.88 L254.8,129.26 L257.2,128.23 L259.6,129.49 L262.2,128.28 L264.7,129.56 L267.2,128.13 L269.3,129.31 L271.5,127.38 L273.3,128.86 L275.4,128.15 L277.3,129.31 L279.8,127.78 L282.0,129.32 L283.9,128.32 L286.3,129.50 L288.8,128.29 L290.9,129.83 L292.9,128.24 L295.1,129.52 L297.3,128.25 L299.1,129.81 L301.2,128.59 L303.4,129.64 L305.7,128.16 L308.2,129.38 L310.1,127.85 L312.6,129.11 L314.6,127.76 L316.5,129.14 L318.4,127.78 L320.4,129.07 L322.3,128.10 L324.5,128.78 L326.7,127.71 L328.8,128.74 L330.8,127.68 L333.0,129.31 L335.5,127.63 L338.0,129.19 L340.0,128.42 L342.7,129.51 L344.6,128.62 L346.5,129.82 L348.9,128.25 L351.3,128.88 L353.7,127.80 L355.5,129.40 L357.7,128.25 L359.5,128.75 L361.8,127.71 L363.7,128.61 L366.2,127.65 L368.0,129.04 L370.2,127.84 L372.4,128.97 L374.7,127.28 L377.2,128.45 L379.6,127.38 L381.5,128.29 L384.0,127.45 L386.5,128.87 L388.8,127.41 L391.3,128.98 L393.7,127.55 L395.8,129.46 L398.2,127.99 L400.3,129.24 L402.4,128.38 L404.4,129.47 L406.4,128.29 L408.5,129.69 L410.7,127.93 L413.0,129.67 L415.6,127.78 L418.1,128.85 L419.9,127.50 L421.7,128.78 L423.9,127.11 L426.2,129.09 L428.7,127.39 L431.1,128.65 L433.0,127.39 L435.2,128.38 L437.8,127.34 L440.1,128.45 L442.4,127.52 L444.8,128.30 L446.8,127.22 L449.2,128.53 L451.6,126.57 L454.2,128.14 L456.4,126.54 L458.3,128.44 L460.7,126.77 L463.2,128.25 L465.5,127.40 L467.3,128.38 L469.5,127.52 L471.5,128.79 L473.9,127.34 L476.5,128.90 L478.4,127.89 L480.7,129.02 L483.0,127.85 L485.4,129.14 L487.3,128.10 L489.9,128.93 L491.9,127.75 L493.7,128.85 L495.6,127.90 L497.9,129.04 L499.8,127.54 L502.3,128.43 L504.8,127.36 L506.7,128.60 L509.2,127.33 L511.8,128.61 L514.2,127.71 L516.3,128.85 L518.2,127.11 L520.3,128.50 L522.8,127.26 L525.1,128.05 L527.5,127.26 L529.4,128.51 L531.5,126.83 L533.8,128.84 L536.3,127.18 L538.4,128.47 L540.9,127.74 L543.0,128.71 L545.1,127.63 L547.4,128.98 L549.9,127.92 L552.3,129.14 L554.1,127.94 L556.3,129.58 L558.8,127.83 L561.3,128.57 L563.7,128.06 L566.0,128.95 L568.3,127.55 L570.8,128.86 L572.9,127.12 L575.2,128.69 L577.6,127.37 L579.7,129.19 L582.2,127.85 L584.8,129.63 L587.0,128.18 L589.1,129.26 L591.5,128.52 L593.5,129.35 L595.5,128.63 L597.5,129.35 L599.9,127.97 L602.1,129.27 L603.9,127.66 L605.9,128.71 L608.1,127.36 L610.1,128.43 L612.2,126.99 L614.4,128.54 L616.9,127.03 L619.5,128.24 L621.3,127.36 L623.4,128.84 L625.4,127.84 L627.4,128.79 L629.5,127.66 L631.8,128.59 L633.8,127.17 L636.0,129.04 L638.0,127.75 L640.5,128.66 L643.0,127.74 L645.0,128.74 L647.2,127.42 L649.4,129.07 L651.9,127.60 L653.7,129.13 L656.0,128.18 L658.5,128.97 L660.3,127.67 L662.7,128.92 L664.5,127.52 L667.1,129.10 L668.9,127.55 L670.9,128.94 L672.6,127.88 L674.6,129.22 L676.7,128.15 L678.7,129.26 L680.7,127.54 L682.8,129.27 L685.2,127.63 L687.0,128.58 L689.4,127.88 L691.5,129.24 L693.3,127.89 L695.2,128.66 L697.8,127.58 L700.1,129.22 L702.2,127.70 L704.0,128.95 L706.6,127.71 L708.9,128.61 L710.9,127.80 L713.0,129.02 L715.5,127.88 L718.0,129.26 L720.0,128.12 L722.4,129.50 L724.8,128.54 L727.4,129.46 L729.2,128.04 L731.6,129.39 L733.7,128.04 L736.3,129.04 L738.5,127.58 L740.5,129.44 L743.0,128.15 L745.5,129.23 L747.5,127.62 L749.4,128.84 L751.2,127.30 L753.8,128.85 L756.1,127.92 L758.4,129.04 L760.3,128.15 L762.4,129.05 L764.6,127.72 L766.7,128.85 L769.0,127.32 L771.3,128.77 L773.6,127.57 L776.1,129.22 L778.6,127.99 L780.7,129.42 L782.9,127.96 L785.5,128.78 L787.9,127.90 L790.2,129.30 L792.5,127.98 L794.6,128.97 L796.4,127.87 L798.4,128.92 L800.3,127.19" fill="none" stroke="#555" stroke-width="1.35" stroke-linejoin="round"/>
<path d="M40.3,245.98 L42.5,246.04 L44.7,245.84 L46.9,245.60 L49.1,245.60 L51.3,245.54 L53.5,245.77 L55.7,245.89 L57.9,245.94 L60.1,245.96 L62.3,246.02 L64.5,245.82 L66.7,244.64 L68.9,245.60 L71.1,245.81 L73.3,245.61 L75.5,245.76 L77.7,245.70 L79.9,245.69 L82.1,245.90 L84.3,245.65 L86.5,245.48 L88.7,245.76 L90.9,245.79 L93.1,245.60 L95.3,245.90 L97.5,246.11 L99.7,245.87 L101.9,245.83 L104.1,244.34 L106.3,245.53 L108.5,245.69 L110.7,245.50 L112.9,245.41 L115.1,245.66 L117.3,245.65 L119.5,245.65 L121.7,245.74 L123.9,245.75 L126.1,245.71 L128.3,245.50 L130.5,245.69 L132.7,245.95 L134.9,244.50 L137.1,246.04 L139.3,246.09 L141.5,246.13 L143.7,245.88 L145.9,245.74 L148.1,245.69 L150.3,245.73 L152.5,245.90 L154.7,245.89 L156.9,243.82 L159.1,245.69 L161.3,245.58 L163.5,245.59 L165.7,245.58 L167.9,245.77 L170.1,245.58 L172.3,245.66 L174.5,245.53 L176.7,245.69 L178.9,245.48 L181.1,244.09 L183.3,245.29 L185.5,245.38 L187.7,245.32 L189.9,245.31 L192.1,245.40 L194.3,245.71 L196.5,245.72 L198.7,245.97 L200.9,245.77 L203.1,245.99 L205.3,245.89 L207.5,245.72 L209.7,245.86 L211.9,245.05 L214.1,246.14 L216.3,245.99 L218.5,245.83 L220.7,245.57 L222.9,245.39 L225.1,245.53 L227.3,245.83 L229.5,246.07 L231.7,244.99 L233.9,246.12 L236.1,246.22 L238.3,246.20 L240.5,245.98 L242.7,245.96 L244.9,245.91 L247.1,245.95 L249.3,245.80 L251.5,246.02 L253.7,245.01 L255.9,246.28 L258.1,246.07 L260.3,246.23 L262.5,246.15 L264.7,246.17 L266.9,246.20 L269.1,245.97 L271.3,245.82 L273.5,245.69 L275.7,244.10 L277.9,245.99 L280.1,245.90 L282.3,245.75 L284.5,245.72 L286.7,245.97 L288.9,245.96 L291.1,245.98 L293.3,244.19 L295.5,246.03 L297.7,246.02 L299.9,246.17 L302.1,246.23 L304.3,246.18 L306.5,246.02 L308.7,245.90 L310.9,245.99 L313.1,245.97 L315.3,245.69 L317.5,245.80 L319.7,246.00 L321.9,246.09 L324.1,246.22 L326.3,246.33 L328.5,244.44 L330.7,245.93 L332.9,245.82 L335.1,245.71 L337.3,245.93 L339.5,245.99 L341.7,245.96 L343.9,245.98 L346.1,245.74 L348.3,245.76 L350.5,245.85 L352.7,244.53 L354.9,245.68 L357.1,245.78 L359.3,245.59 L361.5,245.41 L363.7,245.38 L365.9,245.55 L368.1,245.71 L370.3,245.80 L372.5,246.00 L374.7,245.88 L376.9,244.12 L379.1,245.47 L381.3,245.60 L383.5,245.55 L385.7,245.45 L387.9,245.42 L390.1,245.70 L392.3,245.45 L394.5,245.44 L396.7,245.38 L398.9,245.30 L401.1,245.34 L403.3,243.36 L405.5,245.46 L407.7,245.34 L409.9,245.40 L412.1,245.51 L414.3,245.72 L416.5,245.59 L418.7,245.59 L420.9,245.79 L423.1,245.94 L425.3,245.75 L427.5,245.76 L429.7,244.48 L431.9,245.92 L434.1,246.11 L436.3,246.05 L438.5,246.07 L440.7,245.92 L442.9,245.99 L445.1,245.84 L447.3,245.81 L449.5,245.71 L451.7,245.61 L453.9,245.44 L456.1,245.35 L458.3,245.44 L460.5,245.36 L462.7,243.39 L464.9,245.51 L467.1,245.59 L469.3,245.55 L471.5,245.76 L473.7,245.94 L475.9,245.80 L478.1,245.58 L480.3,245.67 L482.5,245.84 L484.7,244.08 L486.9,245.88 L489.1,245.72 L491.3,245.66 L493.5,245.60 L495.7,245.55 L497.9,245.52 L500.1,245.70 L502.3,245.53 L504.5,245.41 L506.7,245.33 L508.9,244.11 L511.1,245.80 L513.3,245.96 L515.5,246.06 L517.7,245.90 L519.9,245.97 L522.1,245.81 L524.3,243.73 L526.5,245.46 L528.7,245.68 L530.9,245.44 L533.1,245.38 L535.3,245.19 L537.5,245.11 L539.7,245.05 L541.9,245.27 L544.1,245.24 L546.3,245.17 L548.5,245.10 L550.7,245.11 L552.9,245.40 L555.1,245.50 L557.3,245.32 L559.5,245.48 L561.7,244.07 L563.9,245.62 L566.1,245.77 L568.3,245.74 L570.5,245.79 L572.7,245.74 L574.9,245.78 L577.1,245.69 L579.3,245.63 L581.5,245.64 L583.7,245.74 L585.9,245.60 L588.1,245.82 L590.3,243.91 L592.5,245.97 L594.7,245.99 L596.9,245.87 L599.1,245.77 L601.3,245.79 L603.5,245.88 L605.7,245.99 L607.9,245.73 L610.1,245.48 L612.3,245.31 L614.5,245.16 L616.7,245.02 L618.9,244.89 L621.1,244.91 L623.3,243.17 L625.5,245.23 L627.7,245.53 L629.9,245.67 L632.1,245.88 L634.3,245.58 L636.5,245.45 L638.7,245.69 L640.9,245.65 L643.1,245.49 L645.3,245.64 L647.5,245.59 L649.7,245.61 L651.9,245.51 L654.1,244.31 L656.3,245.66 L658.5,245.88 L660.7,245.95 L662.9,246.09 L665.1,245.92 L667.3,245.75 L669.5,245.92 L671.7,245.90 L673.9,245.92 L676.1,245.60 L678.3,245.46 L680.5,245.47 L682.7,245.60 L684.9,244.00 L687.1,245.66 L689.3,245.82 L691.5,246.01 L693.7,245.91 L695.9,245.69 L698.1,245.72 L700.3,245.71 L702.5,245.61 L704.7,245.46 L706.9,243.81 L709.1,245.47 L711.3,245.71 L713.5,245.80 L715.7,245.62 L717.9,245.57 L720.1,245.36 L722.3,245.52 L724.5,244.41 L726.7,245.62 L728.9,245.64 L731.1,245.56 L733.3,245.46 L735.5,245.40 L737.7,245.68 L739.9,245.56 L742.1,245.56 L744.3,245.53 L746.5,245.37 L748.7,245.35 L750.9,245.24 L753.1,243.84 L755.3,245.49 L757.5,245.39 L759.7,245.33 L761.9,245.45 L764.1,245.41 L766.3,245.44 L768.5,245.53 L770.7,245.31 L772.9,245.44 L775.1,244.00 L777.3,245.55 L779.5,245.63 L781.7,245.44 L783.9,245.42 L786.1,245.33 L788.3,245.54 L790.5,245.40 L792.7,245.27 L794.9,245.38 L797.1,245.47 L799.3,245.52 L801.5,245.51" fill="none" stroke="#606060" stroke-width="1.5" stroke-linejoin="round"/>
<path d="M40.3,352.89 L42.7,351.50 L44.6,352.65 L47.0,350.85 L49.0,352.60 L51.5,351.42 L53.5,353.01 L56.0,351.00 L58.4,353.71 L60.4,351.95 L62.8,353.76 L64.9,352.09 L66.7,354.24 L69.3,352.28 L71.8,354.01 L73.9,352.08 L76.1,353.54 L78.4,352.06 L80.6,353.29 L82.6,352.03 L84.9,353.88 L87.3,352.87 L89.2,354.82 L91.5,352.57 L94.0,354.87 L95.9,353.15 L98.3,354.96 L100.6,353.18 L102.9,354.91 L105.0,353.30 L107.0,354.88 L108.9,353.09 L111.2,354.71 L113.0,352.99 L114.9,354.78 L116.7,352.72 L119.0,354.16 L121.1,353.14 L123.1,355.05 L125.4,352.81 L127.4,354.53 L129.9,353.21 L132.3,355.01 L134.6,353.53 L136.6,354.90 L138.4,353.54 L140.8,354.83 L143.3,353.29 L145.5,354.93 L147.6,352.86 L149.5,355.11 L151.5,353.89 L153.4,355.31 L155.9,354.35 L158.2,355.85 L160.2,354.12 L162.1,355.47 L164.6,353.73 L166.7,355.78 L168.6,353.88 L171.2,356.28 L173.4,354.18 L175.9,356.16 L177.7,354.44 L180.0,356.76 L182.0,354.69 L183.8,356.10 L186.2,354.53 L188.6,356.82 L191.1,355.26 L193.6,356.52 L196.2,355.09 L198.7,356.38 L200.4,354.97 L203.0,356.86 L205.5,354.45 L208.0,356.58 L210.1,355.30 L212.1,357.09 L214.0,355.77 L216.5,356.76 L218.8,354.91 L221.0,357.41 L222.9,355.48 L225.0,357.43 L227.6,355.49 L229.5,357.31 L232.0,355.45 L234.3,357.23 L236.1,355.27 L238.1,356.88 L240.5,355.17 L242.9,357.43 L245.5,355.35 L247.9,357.76 L250.2,355.94 L252.6,357.23 L254.9,355.84 L257.3,357.84 L259.8,356.01 L261.9,358.11 L264.5,356.00 L267.1,357.93 L268.9,356.19 L271.4,358.47 L273.5,356.07 L276.0,357.36 L277.9,355.79 L280.5,357.59 L282.5,354.89 L284.3,356.58 L286.1,355.28 L288.0,356.77 L289.8,354.68 L292.4,356.95 L294.8,354.99 L296.7,356.91 L298.9,354.87 L300.8,357.06 L302.9,355.32 L305.2,357.37 L307.2,355.73 L309.5,357.28 L312.1,354.80 L314.1,356.47 L316.2,354.59 L318.5,356.77 L320.5,354.86 L322.2,356.61 L324.1,355.11 L326.2,356.83 L328.0,355.51 L329.9,357.03 L332.0,355.52 L333.8,357.69 L336.1,355.80 L338.4,357.91 L340.7,356.09 L342.8,357.76 L344.8,355.76 L347.1,357.55 L349.3,355.26 L351.5,357.49 L353.9,355.30 L356.1,357.17 L358.1,355.49 L360.7,356.83 L363.1,354.84 L365.0,357.08 L367.2,355.07 L369.7,357.06 L371.8,354.71 L374.0,356.98 L376.1,355.64 L378.7,357.22 L381.0,354.68 L383.2,356.53 L385.7,355.37 L387.5,357.27 L390.0,355.46 L392.5,356.90 L394.7,355.53 L397.2,356.84 L399.4,355.06 L402.1,357.14 L404.3,355.14 L406.2,356.76 L408.4,354.98 L410.2,356.63 L412.6,354.91 L415.3,356.72 L417.6,354.90 L419.6,356.76 L421.9,355.15 L424.3,356.43 L426.6,354.87 L428.8,356.47 L431.0,354.66 L433.4,356.66 L435.6,354.71 L437.8,356.73 L439.6,355.00 L441.7,356.63 L444.1,354.97 L446.6,356.15 L449.2,354.51 L451.5,356.70 L453.4,354.34 L455.6,356.59 L458.0,355.21 L460.4,357.02 L462.8,354.81 L465.1,356.88 L467.3,354.84 L469.7,356.75 L471.8,354.67 L474.1,355.81 L476.1,354.70 L478.5,356.06 L480.8,354.62 L483.1,355.88 L485.7,354.33 L487.7,356.30 L490.2,353.90 L492.0,356.00 L493.9,354.44 L496.3,356.49 L498.5,354.44 L501.1,355.39 L503.2,353.83 L505.7,355.59 L508.1,353.54 L510.7,355.57 L512.7,353.04 L514.8,355.13 L516.7,353.17 L519.2,355.21 L521.0,353.10 L522.9,354.73 L525.0,352.69 L526.9,355.15 L529.1,353.08 L531.2,354.59 L533.2,353.25 L535.0,355.11 L537.1,353.23 L539.4,355.11 L541.5,352.90 L543.4,355.18 L545.9,352.99 L547.8,354.93 L550.3,353.28 L552.5,354.89 L555.0,353.00 L557.1,354.38 L559.6,353.15 L561.6,355.00 L563.6,352.79 L565.5,354.02 L567.8,352.92 L569.8,354.22 L571.7,352.81 L573.7,354.12 L575.7,352.61 L577.5,354.07 L579.7,352.58 L582.1,354.83 L584.1,352.66 L586.0,354.40 L588.1,352.67 L590.1,354.70 L592.1,353.00 L594.4,354.90 L596.8,352.72 L599.2,354.62 L601.7,352.65 L603.8,353.84 L606.4,352.55 L608.3,354.13 L610.8,352.33 L612.9,354.11 L615.3,351.92 L617.5,354.29 L619.9,351.57 L622.5,353.22 L624.7,351.48 L627.2,352.91 L628.9,350.67 L630.7,352.89 L633.3,350.94 L635.3,352.85 L637.4,351.40 L639.6,353.45 L641.7,351.15 L644.0,352.64 L646.3,350.97 L648.1,352.94 L650.4,351.44 L652.4,352.99 L654.2,351.38 L656.7,352.93 L659.0,351.14 L661.0,352.70 L663.4,350.59 L665.3,352.98 L667.8,350.45 L669.6,352.54 L671.8,350.70 L673.9,352.35 L675.9,350.42 L678.5,352.23 L680.8,350.57 L683.4,351.86 L685.7,350.45 L688.3,352.20 L690.2,350.38 L692.4,352.12 L694.9,350.78 L697.3,352.24 L699.1,350.42 L701.5,352.93 L703.6,350.92 L706.1,352.67 L708.6,351.32 L710.5,352.77 L712.5,350.47 L714.5,352.06 L716.6,350.24 L718.8,352.43 L721.2,350.41 L723.0,352.44 L725.4,350.53 L727.3,352.02 L729.6,350.38 L731.7,352.34 L734.0,349.77 L736.5,351.72 L738.4,349.43 L741.0,350.55 L743.6,348.96 L745.7,350.12 L748.0,348.39 L750.6,350.33 L752.7,348.20 L754.6,350.11 L756.9,348.43 L758.8,350.16 L760.7,348.06 L762.9,349.66 L764.7,347.88 L767.2,349.27 L769.1,347.94 L771.6,349.65 L774.1,347.43 L776.1,348.84 L778.0,346.53 L780.4,349.12 L782.5,347.66 L784.7,349.09 L786.7,347.05 L789.1,349.43 L791.7,346.46 L793.6,348.02 L795.6,345.97 L797.5,348.20 L799.4,346.33 L801.5,348.56" fill="none" stroke="#555" stroke-width="1.35" stroke-linejoin="round"/>
<path d="M40.3,459.92 L42.6,458.65 L44.6,460.46 L46.6,458.88 L49.1,460.01 L51.6,458.65 L54.1,460.05 L56.4,459.02 L58.7,460.10 L60.5,458.04 L62.6,460.46 L64.9,458.98 L66.8,460.94 L68.7,458.60 L70.9,460.34 L72.9,458.97 L74.7,460.61 L76.7,458.72 L78.6,460.35 L80.8,459.12 L82.9,460.80 L85.2,458.94 L87.2,461.25 L89.0,458.88 L91.3,460.59 L93.9,458.94 L96.1,460.77 L98.1,459.00 L100.3,460.61 L102.1,458.63 L104.4,460.93 L106.5,459.22 L108.3,460.30 L110.9,458.99 L113.2,460.80 L115.6,459.24 L117.9,461.56 L120.1,460.08 L122.2,462.03 L124.6,459.86 L126.9,461.98 L129.1,460.07 L131.0,461.55 L132.8,459.68 L135.1,461.54 L137.1,459.71 L138.9,460.99 L141.3,459.33 L143.3,461.48 L145.4,459.99 L147.6,461.46 L149.6,459.61 L152.1,461.52 L154.7,460.17 L157.2,461.97 L159.8,459.98 L161.6,462.09 L163.5,460.43 L165.2,462.38 L167.4,460.70 L170.0,462.24 L172.4,459.79 L174.3,462.59 L176.9,460.98 L179.0,462.80 L180.8,460.25 L183.3,462.82 L185.5,461.12 L188.1,462.42 L190.3,461.11 L192.7,463.03 L194.6,460.79 L196.8,462.69 L198.7,461.04 L200.7,462.67 L202.5,461.41 L204.3,463.37 L206.6,461.79 L208.6,463.63 L210.9,461.68 L213.3,463.25 L215.5,461.80 L217.7,463.45 L219.6,462.22 L222.1,463.73 L224.3,461.49 L226.7,463.32 L228.8,462.13 L231.3,463.24 L233.1,461.27 L235.6,462.90 L237.8,461.57 L239.9,463.50 L241.9,461.64 L244.1,463.16 L246.6,461.63 L249.1,463.13 L251.1,461.13 L252.9,463.11 L255.4,462.01 L257.8,463.43 L260.1,461.68 L262.5,463.33 L264.4,461.81 L266.9,463.44 L268.7,461.85 L271.3,463.05 L273.5,461.68 L275.8,463.34 L278.4,461.81 L280.5,463.87 L282.8,461.67 L284.6,462.94 L286.6,461.12 L289.0,463.50 L291.2,461.00 L293.3,463.20 L295.6,461.53 L298.2,463.45 L300.4,461.77 L302.4,462.95 L305.0,461.46 L307.3,462.62 L309.3,461.40 L311.7,462.81 L314.2,461.59 L316.8,463.15 L319.3,460.73 L321.4,463.10 L323.6,461.34 L326.1,462.93 L328.5,461.22 L331.1,463.54 L333.1,461.23 L334.9,463.28 L337.0,461.71 L339.2,463.15 L341.3,461.30 L343.4,463.60 L345.5,461.61 L347.5,463.23 L349.7,461.55 L352.1,463.72 L354.7,461.86 L356.9,463.80 L359.1,462.08 L361.1,463.45 L363.2,461.44 L365.6,463.71 L367.6,462.49 L369.7,464.31 L372.0,462.75 L373.8,464.23 L375.6,462.01 L377.6,463.60 L379.4,462.81 L381.3,464.21 L383.4,461.98 L385.7,463.66 L387.9,461.62 L389.7,463.17 L392.0,461.09 L393.9,462.46 L396.3,461.21 L398.3,463.25 L400.8,461.66 L403.3,463.59 L405.5,461.86 L407.5,463.13 L409.9,461.84 L412.4,463.15 L414.9,461.93 L417.2,463.03 L419.8,461.10 L421.6,462.47 L423.4,460.98 L425.8,463.00 L427.9,461.21 L429.8,463.10 L431.9,461.77 L434.4,463.51 L436.7,461.48 L439.3,463.75 L441.3,461.69 L443.6,463.53 L445.7,461.06 L447.6,462.94 L450.1,461.48 L452.3,463.01 L454.3,461.14 L456.5,462.46 L459.0,461.07 L461.2,462.28 L463.6,460.21 L466.2,461.80 L468.6,460.26 L470.9,461.66 L472.8,460.04 L474.7,462.21 L476.7,460.26 L478.6,462.23 L480.4,460.77 L482.6,461.96 L485.0,460.24 L487.0,462.36 L489.4,460.56 L491.5,462.69 L494.0,460.57 L495.9,462.24 L498.3,460.84 L500.8,461.99 L502.7,460.28 L505.3,461.63 L507.6,459.86 L509.4,461.88 L511.3,460.12 L513.6,461.88 L515.8,459.93 L518.0,462.05 L519.9,460.30 L522.3,461.58 L524.3,459.79 L526.5,461.94 L528.7,460.12 L530.7,462.00 L532.6,459.86 L534.8,460.86 L537.1,459.03 L539.4,461.39 L541.6,459.95 L543.4,461.42 L545.8,459.32 L547.8,461.73 L550.2,459.82 L552.0,460.84 L553.9,458.87 L556.1,460.55 L558.1,458.71 L560.7,460.61 L563.0,459.60 L565.4,460.86 L567.8,459.44 L570.4,460.93 L572.8,459.08 L575.2,460.88 L577.7,459.49 L579.6,460.83 L581.4,459.26 L583.2,461.64 L585.2,459.78 L587.1,461.17 L589.0,459.22 L591.1,460.78 L593.0,458.80 L594.8,461.18 L596.8,458.90 L599.0,460.94 L601.7,458.50 L603.5,460.56 L606.1,458.82 L608.2,460.51 L610.1,458.52 L611.9,460.39 L613.9,458.73 L616.0,460.21 L618.0,458.29 L620.4,459.94 L622.9,457.68 L624.7,459.11 L627.2,457.56 L629.5,459.68 L631.8,457.47 L633.7,459.28 L636.1,457.86 L638.3,459.48 L640.6,457.75 L642.4,459.79 L645.0,458.49 L647.3,459.97 L649.4,458.28 L651.8,459.81 L653.6,458.64 L656.1,460.02 L658.2,458.57 L660.1,459.79 L662.3,457.86 L664.6,459.62 L666.7,457.71 L669.2,459.50 L671.8,458.11 L674.1,459.91 L676.2,458.30 L678.1,459.70 L680.5,457.55 L682.9,459.16 L685.1,457.77 L687.0,459.53 L689.0,457.28 L691.6,459.55 L694.0,457.49 L696.2,459.28 L698.8,457.70 L701.1,459.81 L703.5,457.71 L705.6,459.24 L707.5,457.23 L710.1,459.08 L712.1,456.88 L714.5,458.94 L716.4,456.84 L718.9,458.44 L720.7,456.80 L722.6,458.61 L725.0,456.80 L726.8,458.26 L729.1,456.34 L730.9,458.09 L733.1,456.10 L735.7,457.39 L737.7,455.66 L739.5,457.35 L741.7,455.36 L743.8,457.37 L746.0,455.92 L748.6,457.77 L750.8,456.21 L752.7,457.28 L754.8,455.91 L756.9,457.82 L758.9,456.19 L761.2,457.36 L763.7,455.56 L765.7,457.44 L768.1,455.35 L770.0,457.29 L772.0,454.87 L774.7,456.83 L776.9,454.92 L779.4,456.84 L781.9,454.88 L783.8,457.22 L785.9,455.00 L788.5,456.56 L791.0,454.44 L793.2,456.45 L795.3,454.77 L797.5,456.08 L799.3,454.26 L801.3,456.42" fill="none" stroke="#555" stroke-width="1.35" stroke-linejoin="round"/>
<line x1="279.7" y1="109" x2="279.7" y2="208.6" stroke="#ff6262" stroke-width="1.7" stroke-dasharray="2.4 3.3"/>
<line x1="537.4" y1="109" x2="537.4" y2="208.6" stroke="#2a2a2a" stroke-width="1.3" stroke-dasharray="2.2 3.5"/>
<line x1="279.7" y1="216.3" x2="279.7" y2="315.5" stroke="#ff6262" stroke-width="1.7" stroke-dasharray="2.4 3.3"/>
<line x1="537.4" y1="216.3" x2="537.4" y2="315.5" stroke="#2a2a2a" stroke-width="1.3" stroke-dasharray="2.2 3.5"/>
<line x1="279.7" y1="323.3" x2="279.7" y2="422.5" stroke="#ff6262" stroke-width="1.7" stroke-dasharray="2.4 3.3"/>
<line x1="537.4" y1="323.3" x2="537.4" y2="422.5" stroke="#2a2a2a" stroke-width="1.3" stroke-dasharray="2.2 3.5"/>
<line x1="279.7" y1="430.3" x2="279.7" y2="529.8" stroke="#ff6262" stroke-width="1.7" stroke-dasharray="2.4 3.3"/>
<line x1="537.4" y1="430.3" x2="537.4" y2="529.8" stroke="#2a2a2a" stroke-width="1.3" stroke-dasharray="2.2 3.5"/>
</svg>
<div class="a" style="left:269px;top:516.5px;color:#ff5050;font-size:13px;line-height:13px">A</div>
<div class="a pt" style="left:527.5px;top:516.5px">B</div>
<div class="a" style="left:15px;top:537.5px;width:788px;height:15px;background:#e8e8e8"></div>
<div class="a" style="left:31px;top:550.5px;width:756px;height:2px;background:#c4c4c4"></div>
<svg class="a" style="left:15px;top:537.5px" width="16" height="15"><path d="M5,7.5 L9,5 L9,10Z" fill="#555"/></svg>
<svg class="a" style="left:787px;top:537.5px" width="16" height="15"><path d="M10.5,7.5 L6.5,5 L6.5,10Z" fill="#555"/><path d="M11,3 L9.5,7 M10,8 L9,12" stroke="#777" stroke-width="0.8"/></svg>
<div class="a" style="left:402.5px;top:537px;width:14.5px;height:15px;border:1px solid #b4b4b4;border-radius:3px;background:linear-gradient(#f2f2f2,#d6d6d6)"></div>
<div class="a" style="left:405px;top:541px;width:9.5px;height:1.2px;background:#9a9a9a"></div>
<div class="a" style="left:11px;top:563px;width:42px;height:2px;background:#2a2a6a"></div>
</body></html>
